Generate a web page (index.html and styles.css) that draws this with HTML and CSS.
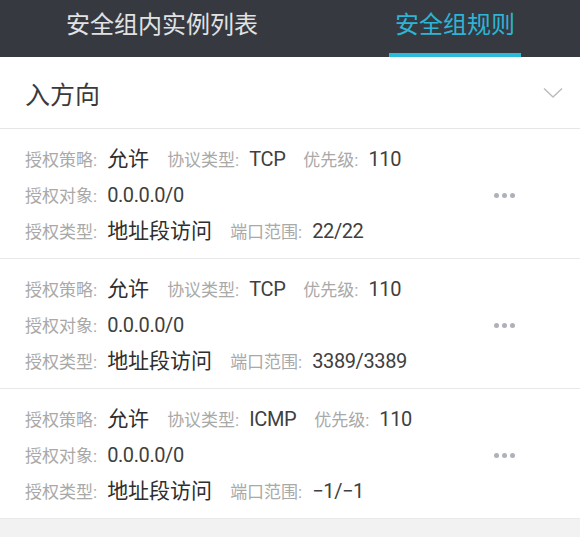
FILE: index.html
```html
<!DOCTYPE html>
<html lang="zh-CN">
<head>
<meta charset="utf-8">
<link rel="stylesheet" href="styles.css">
</head>
<body>
<div class="tabs">
  <div class="tab">安全组内实例列表</div>
  <div class="tab active">安全组规则</div>
</div>
<div class="direction">
  <span class="dir-title">入方向</span>
  <svg class="chevron" width="20" height="12" viewBox="0 0 20 12"><path d="M1 1.5 L10 10 L19 1.5" fill="none" stroke="#bcbcbc" stroke-width="1.4"/></svg>
</div>
<div class="rule">
  <div class="rule-body">
    <div class="row"><span class="label">授权策略:</span><span class="val cjk">允许</span><span class="label">协议类型:</span><span class="val">TCP</span><span class="label">优先级:</span><span class="val">110</span></div>
    <div class="row"><span class="label">授权对象:</span><span class="val">0.0.0.0/0</span></div>
    <div class="row"><span class="label">授权类型:</span><span class="val cjk">地址段访问</span><span class="label">端口范围:</span><span class="val">22/22</span></div>
  </div>
  <div class="more"><i></i><i></i><i></i></div>
</div>
<div class="rule">
  <div class="rule-body">
    <div class="row"><span class="label">授权策略:</span><span class="val cjk">允许</span><span class="label">协议类型:</span><span class="val">TCP</span><span class="label">优先级:</span><span class="val">110</span></div>
    <div class="row"><span class="label">授权对象:</span><span class="val">0.0.0.0/0</span></div>
    <div class="row"><span class="label">授权类型:</span><span class="val cjk">地址段访问</span><span class="label">端口范围:</span><span class="val">3389/3389</span></div>
  </div>
  <div class="more"><i></i><i></i><i></i></div>
</div>
<div class="rule">
  <div class="rule-body">
    <div class="row"><span class="label">授权策略:</span><span class="val cjk">允许</span><span class="label">协议类型:</span><span class="val">ICMP</span><span class="label">优先级:</span><span class="val">110</span></div>
    <div class="row"><span class="label">授权对象:</span><span class="val">0.0.0.0/0</span></div>
    <div class="row"><span class="label">授权类型:</span><span class="val cjk">地址段访问</span><span class="label">端口范围:</span><span class="val">−1/−1</span></div>
  </div>
  <div class="more"><i></i><i></i><i></i></div>
</div>
</body>
</html>
```

FILE: styles.css
```css
* { box-sizing: border-box; }
html, body {
  margin: 0;
  padding: 0;
  background: #f2f2f2;
  font-family: Roboto, "Noto Sans CJK SC", sans-serif;
}
.tabs {
  display: flex;
  height: 57px;
  background: #363a40;
}
.tab {
  margin-left: 66px;
  padding-top: 11px;
  line-height: 28px;
  font-size: 24px;
  color: #e2e2e2;
}
.tab.active {
  margin-left: auto;
  margin-right: 59px;
  padding: 11px 6px 0;
  color: #2db4d6;
  border-bottom: 4px solid #2bbad9;
  height: 57px;
}
.direction {
  display: flex;
  align-items: center;
  justify-content: space-between;
  height: 72px;
  padding: 0 17px 0 25px;
  background: #fff;
  border-bottom: 1px solid #e6e6e6;
}
.dir-title {
  font-size: 25px;
  color: #3a3a3a;
}
.chevron { display: block; }
.rule {
  display: flex;
  align-items: center;
  background: #fff;
  border-bottom: 1px solid #e9e9e9;
  padding: 12px 0 9px 25px;
}
.rule-body { flex: 1; }
.row {
  display: flex;
  align-items: baseline;
  height: 36px;
  line-height: 36px;
  white-space: nowrap;
}
.label {
  font-size: 17px;
  color: #a9a9a9;
  margin-right: 10px;
}
.val {
  font-size: 20px;
  color: #404040;
  margin-right: 18px;
  letter-spacing: -0.4px;
}
.val.cjk {
  font-size: 21px;
  color: #2e2e2e;
  letter-spacing: 0;
}
.more {
  display: flex;
  gap: 3px;
  margin-right: 65px;
}
.more i {
  display: block;
  width: 5px;
  height: 5px;
  border-radius: 50%;
  background: #aeb1b8;
}
```
